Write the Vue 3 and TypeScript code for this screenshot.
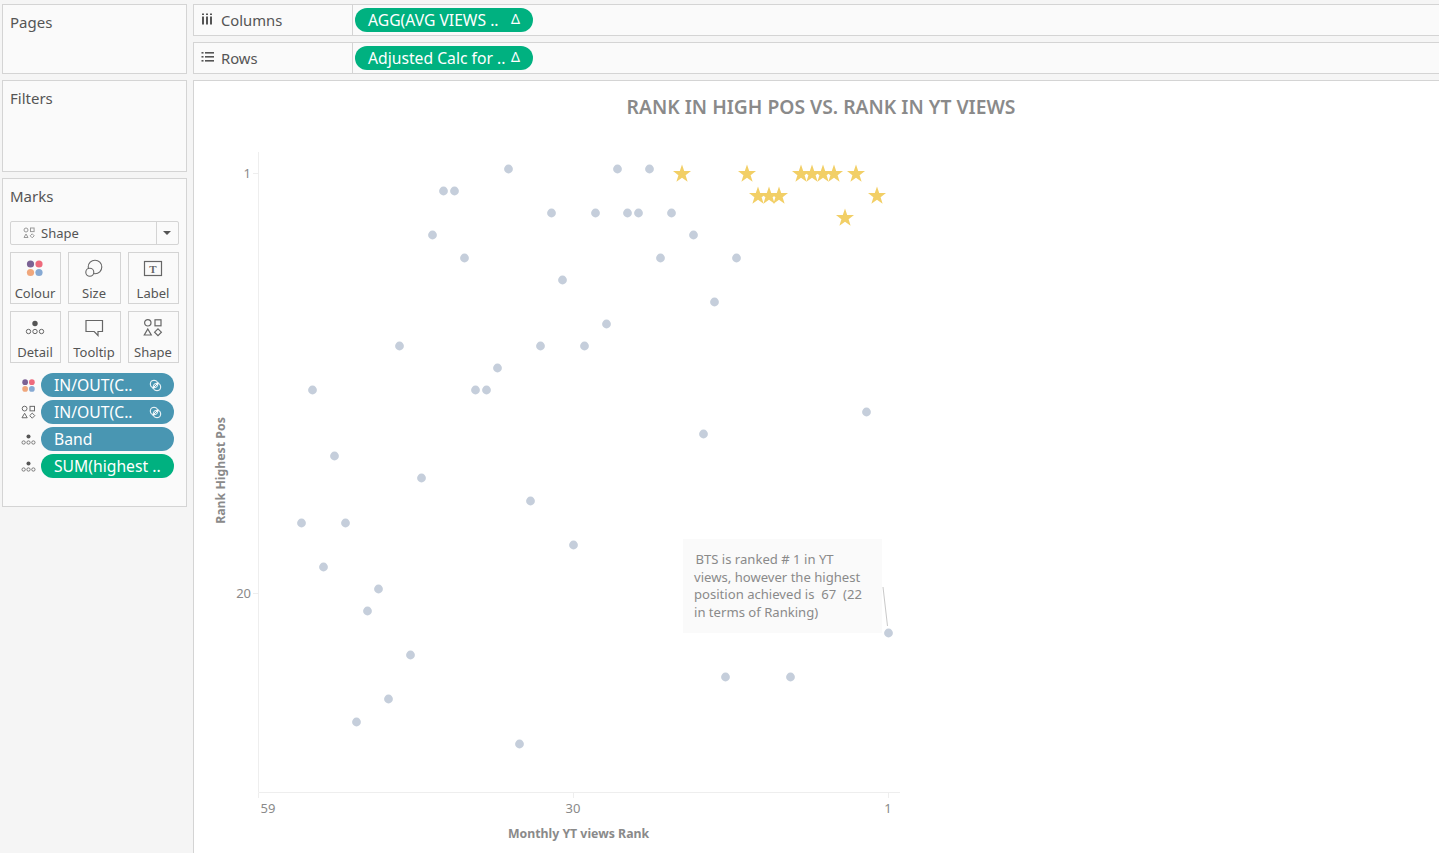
<script setup lang="ts">
const stars: [number, number][] = [
  [682, 174], [747, 174], [801, 174], [812, 174], [823, 174], [834, 174], [856, 174],
  [758, 196], [769, 196], [779, 196], [877, 196], [845, 218],
]
const dots: [number, number][] = [
  [508, 169], [617, 169], [649, 169], [443, 191], [454, 191], [551, 213], [595, 213],
  [627, 213], [638, 213], [671, 213], [432, 235], [693, 235], [464, 258], [660, 258],
  [736, 258], [562, 280], [714, 302], [606, 324], [399, 346], [540, 346], [584, 346],
  [497, 368], [312, 390], [475, 390], [486, 390], [866, 412], [703, 434], [334, 456],
  [421, 478], [530, 501], [301, 523], [345, 523], [573, 545], [323, 567], [378, 589],
  [367, 611], [888, 633], [410, 655], [725, 677], [790, 677], [388, 699], [356, 722],
  [519, 744],
]
// chart svg starts at page x=194, y=81
const ox = 194
const oy = 81
const starPath = (cx: number, cy: number) => {
  const pts: string[] = []
  for (let i = 0; i < 10; i++) {
    const r = i % 2 === 0 ? 9.5 : 3.8
    const a = (Math.PI / 5) * i - Math.PI / 2
    pts.push(`${(cx - ox + r * Math.cos(a)).toFixed(1)},${(cy - oy + r * Math.sin(a)).toFixed(1)}`)
  }
  return pts.join(' ')
}
const cards = [
  { name: 'Colour', icon: 'colour' },
  { name: 'Size', icon: 'size' },
  { name: 'Label', icon: 'label' },
  { name: 'Detail', icon: 'detail' },
  { name: 'Tooltip', icon: 'tooltip' },
  { name: 'Shape', icon: 'shape' },
]
const pills = [
  { text: 'IN/OUT(C..', icon: 'colour', color: 'blue', link: true },
  { text: 'IN/OUT(C..', icon: 'shape', color: 'blue', link: true },
  { text: 'Band', icon: 'detail', color: 'blue', link: false },
  { text: 'SUM(highest ..', icon: 'detail', color: 'green', link: false },
]
</script>

<template>
  <div class="page">
    <aside class="side">
      <section class="box pages">Pages</section>
      <section class="box filters">Filters</section>
      <section class="box marks">
        <div class="marks-title">Marks</div>
        <div class="select">
          <svg class="select-icon" width="12" height="12" viewBox="0 0 12 12">
            <circle cx="3" cy="3" r="2" fill="none" stroke="#999" />
            <rect x="7.5" y="1" width="3.6" height="3.6" fill="none" stroke="#999" />
            <path d="M3 7 L5 10.5 H1 Z" fill="none" stroke="#999" />
            <path d="M9.2 6.8 L11.2 8.8 L9.2 10.8 L7.2 8.8 Z" fill="none" stroke="#999" />
          </svg>
          <span class="select-text">Shape</span>
          <span class="select-arrow"></span>
        </div>
        <div class="cards">
          <div v-for="c in cards" :key="c.name" class="card">
            <svg class="card-icon" width="20" height="20" viewBox="0 0 20 20">
              <g v-if="c.icon === 'colour'">
                <circle cx="5.5" cy="5" r="3.6" fill="#7b6294" />
                <circle cx="14" cy="5" r="3.6" fill="#ee6a7c" />
                <circle cx="5.5" cy="13.5" r="3.6" fill="#f0a77c" />
                <circle cx="14" cy="13.5" r="3.6" fill="#86a9d3" />
              </g>
              <g v-else-if="c.icon === 'size'" fill="none" stroke="#666" stroke-width="1.1">
                <circle cx="11" cy="8" r="6.8" />
                <circle cx="5.8" cy="13.2" r="4" fill="#fafafa" />
              </g>
              <g v-else-if="c.icon === 'label'">
                <rect x="1.5" y="2.5" width="17" height="14" fill="none" stroke="#666" stroke-width="1.2" />
                <text x="10" y="13.5" text-anchor="middle" class="label-t">T</text>
              </g>
              <g v-else-if="c.icon === 'detail'" fill="none" stroke="#666">
                <circle cx="10" cy="5.5" r="2.7" fill="#555" stroke="none" />
                <circle cx="3.5" cy="13.5" r="2.2" />
                <circle cx="10" cy="13.5" r="2.2" />
                <circle cx="16.5" cy="13.5" r="2.2" />
              </g>
              <g v-else-if="c.icon === 'tooltip'" fill="none" stroke="#666" stroke-width="1.2">
                <path d="M2 2.5 H18.5 V13.5 H14 V17.5 L10.2 13.5 H2 Z" />
              </g>
              <g v-else fill="none" stroke="#666" stroke-width="1.2">
                <circle cx="4.8" cy="4.8" r="3.2" />
                <rect x="12" y="1.8" width="6" height="6" />
                <path d="M4.8 11 L8.3 17 H1.3 Z" />
                <path d="M15 10.8 L18.4 14.2 L15 17.6 L11.6 14.2 Z" />
              </g>
            </svg>
            <span class="card-name">{{ c.name }}</span>
          </div>
        </div>
        <div class="pills">
          <div v-for="(p, i) in pills" :key="i" class="pill-row">
            <svg class="pill-icon" width="16" height="16" viewBox="0 0 20 20">
              <g v-if="p.icon === 'colour'">
                <circle cx="5.5" cy="5.5" r="3.8" fill="#7b6294" />
                <circle cx="14.5" cy="5.5" r="3.8" fill="#ee6a7c" />
                <circle cx="5.5" cy="14.5" r="3.8" fill="#f0a77c" />
                <circle cx="14.5" cy="14.5" r="3.8" fill="#86a9d3" />
              </g>
              <g v-else-if="p.icon === 'shape'" fill="none" stroke="#666" stroke-width="1.3">
                <circle cx="4.8" cy="4.8" r="3.2" />
                <rect x="12" y="1.8" width="6" height="6" />
                <path d="M4.8 11 L8.3 17 H1.3 Z" />
                <path d="M15 10.8 L18.4 14.2 L15 17.6 L11.6 14.2 Z" />
              </g>
              <g v-else fill="none" stroke="#666" stroke-width="1.1">
                <circle cx="10" cy="6" r="2.7" fill="#555" stroke="none" />
                <circle cx="3.5" cy="14" r="2.2" />
                <circle cx="10" cy="14" r="2.2" />
                <circle cx="16.5" cy="14" r="2.2" />
              </g>
            </svg>
            <div class="pill side-pill" :class="p.color">
              <span>{{ p.text }}</span>
              <svg v-if="p.link" class="link" width="13" height="13" viewBox="0 0 13 13" fill="none" stroke="#fff" stroke-width="1">
                <circle cx="5" cy="5" r="3.8" />
                <circle cx="8" cy="8" r="3.8" />
                <path d="M3.5 9.5 L9.5 3.5" />
              </svg>
            </div>
          </div>
        </div>
      </section>
    </aside>
    <main class="main">
      <div class="shelf">
        <div class="shelf-head">
          <svg class="shelf-icon" width="14" height="12" viewBox="0 0 14 12" fill="#555">
            <rect x="1" y="3.5" width="2" height="8" />
            <rect x="5" y="3.5" width="2" height="8" />
            <rect x="9" y="3.5" width="2" height="8" />
            <rect x="1" y="0.5" width="2" height="1.5" />
            <rect x="5" y="0.5" width="2" height="1.5" />
            <rect x="9" y="0.5" width="2" height="1.5" />
          </svg>
          <span>Columns</span>
        </div>
        <div class="pill shelf-pill green">
          <span>AGG(AVG VIEWS ..</span>
          <span class="delta">Δ</span>
        </div>
      </div>
      <div class="shelf">
        <div class="shelf-head">
          <svg class="shelf-icon" width="14" height="12" viewBox="0 0 14 12" fill="#555">
            <rect x="0.5" y="1" width="2" height="1.6" />
            <rect x="0.5" y="5" width="2" height="1.6" />
            <rect x="0.5" y="9" width="2" height="1.6" />
            <rect x="4" y="1" width="9" height="1.6" />
            <rect x="4" y="5" width="9" height="1.6" />
            <rect x="4" y="9" width="9" height="1.6" />
          </svg>
          <span>Rows</span>
        </div>
        <div class="pill shelf-pill green">
          <span>Adjusted Calc for ..</span>
          <span class="delta">Δ</span>
        </div>
      </div>
      <div class="view">
        <svg class="plot" width="1245" height="772" viewBox="0 0 1245 772">
          <text x="627" y="33" text-anchor="middle" class="title">RANK IN HIGH POS VS. RANK IN YT VIEWS</text>
          <path d="M64.5 71 V711.5 H706" fill="none" stroke="#eeeeee" />
          <path d="M59 92.5 H64 M59 512.5 H64 M64.5 712 V717 M379.5 712 V717 M694.5 712 V717" stroke="#eeeeee" />
          <text x="57" y="97" text-anchor="end" class="tick">1</text>
          <text x="57" y="517" text-anchor="end" class="tick">20</text>
          <text x="74" y="732" text-anchor="middle" class="tick">59</text>
          <text x="379" y="732" text-anchor="middle" class="tick">30</text>
          <text x="694" y="732" text-anchor="middle" class="tick">1</text>
          <text x="384.5" y="757" text-anchor="middle" class="axis">Monthly YT views Rank</text>
          <text transform="translate(31 389.5) rotate(-90)" text-anchor="middle" class="axis">Rank Highest Pos</text>
          <circle v-for="(d, i) in dots" :key="i" :cx="d[0] - ox + 0.5" :cy="d[1] - oy" r="4.4" fill="#c5cedb" />
          <polygon v-for="(s, i) in stars" :key="'s' + i" :points="starPath(s[0], s[1])" fill="#f2cf66" />
          <path d="M689 506 L693.5 545" stroke="#c9c9c9" fill="none" />
        </svg>
        <div class="note">
          <div class="note-first">&nbsp;BTS is ranked # 1 in YT</div>
          <div>views, however the highest</div>
          <div>position achieved is&nbsp; 67&nbsp; (22</div>
          <div>in terms of Ranking)</div>
        </div>
      </div>
    </main>
  </div>
</template>

<style>
html, body {
  margin: 0;
  background: #f5f5f5;
}
</style>

<style scoped>
.page {
  display: flex;
  width: 1439px;
  height: 853px;
  overflow: hidden;
  box-sizing: border-box;
  padding-top: 4px;
  background: #f5f5f5;
  font-family: "Noto Sans", sans-serif;
  color: #555;
}
.side {
  width: 185px;
  margin-left: 2px;
  flex: none;
  display: flex;
  flex-direction: column;
  gap: 6px;
}
.box {
  box-sizing: border-box;
  border: 1px solid #d4d4d4;
  background: #fafafa;
  font-size: 15px;
  line-height: 20px;
  padding: 7px 7px;
}
.pages { height: 70px; }
.filters { height: 92px; }
.marks { height: 329px; padding: 7px 7px 0; }
.select {
  display: flex;
  align-items: center;
  height: 24px;
  margin-top: 15px;
  width: 169px;
  border: 1px solid #d4d4d4;
  border-radius: 2px;
  background: #fafafa;
  box-sizing: border-box;
  font-size: 13px;
}
.select-icon { margin-left: 12px; }
.select-text { margin-left: 6px; flex: 1; }
.select-arrow {
  width: 21px;
  height: 22px;
  border-left: 1px solid #d4d4d4;
  position: relative;
}
.select-arrow::after {
  content: "";
  position: absolute;
  left: 6px;
  top: 9px;
  border: 4px solid transparent;
  border-top-color: #555;
  border-bottom: 0;
}
.cards {
  display: grid;
  grid-template-columns: 51px 53px 51px;
  column-gap: 7px;
  row-gap: 7px;
  margin-top: 7px;
}
.card {
  box-sizing: border-box;
  height: 52px;
  border: 1px solid #d4d4d4;
  display: flex;
  flex-direction: column;
  align-items: center;
  font-size: 13px;
  line-height: 18px;
  padding-top: 6px;
  gap: 5px;
}
.card-icon { flex: none; margin-right: 2px; }
.card-name { margin-right: 1px; }
.label-t {
  font-family: "Liberation Serif", serif;
  font-size: 11px;
  font-weight: 700;
  fill: #666;
}
.pills {
  margin-top: 10px;
  display: flex;
  flex-direction: column;
  gap: 3px;
}
.pill-row {
  display: flex;
  align-items: center;
  gap: 5px;
  padding-left: 11px;
}
.pill-icon { width: 15px; height: 15px; flex: none; }
.pill {
  display: flex;
  align-items: center;
  color: #fff;
  font-size: 15.7px;
  border-radius: 12px;
  height: 24px;
  box-sizing: border-box;
  white-space: nowrap;
}
.side-pill {
  width: 133px;
  padding: 0 12px 0 13px;
  justify-content: space-between;
}
.blue { background: #4996b2; }
.green { background: #00b180; }
.link { flex: none; }
.main {
  margin-left: 6px;
  flex: 1;
  min-width: 0;
  display: flex;
  flex-direction: column;
  gap: 6px;
}
.shelf {
  box-sizing: border-box;
  height: 32px;
  flex: none;
  display: flex;
  align-items: center;
  border: 1px solid #d4d4d4;
  border-right: 0;
  background: #fafafa;
}
.shelf-head {
  box-sizing: border-box;
  width: 159px;
  height: 100%;
  border-right: 1px solid #d4d4d4;
  display: flex;
  align-items: center;
  gap: 6px;
  padding-left: 7px;
  font-size: 14.8px;
}
.shelf-icon { margin-top: -3px; }
.shelf-pill {
  width: 178px;
  margin-left: 2px;
  padding: 0 13px 0 13px;
  justify-content: space-between;
}
.delta { font-size: 14px; margin-top: -3px; }
.view {
  flex: 1;
  position: relative;
  background: #fff;
  border: 1px solid #d4d4d4;
  border-right: 0;
  border-bottom: 0;
}
.plot { display: block; }
.title {
  font-family: "Noto Sans", sans-serif;
  font-size: 19.3px;
  font-weight: 600;
  fill: #8a8a8a;
}
.tick {
  font-size: 13px;
  fill: #8a8a8a;
}
.axis {
  font-size: 12.3px;
  font-weight: 700;
  fill: #8a8a8a;
}
.note {
  position: absolute;
  left: 489px;
  top: 458px;
  width: 199px;
  height: 94px;
  box-sizing: border-box;
  padding: 12px 11px;
  background: #fafafa;
  font-size: 13.1px;
  line-height: 17.6px;
  color: #8a8a8a;
  white-space: nowrap;
}
.note-first { margin-left: -2px; }
</style>
